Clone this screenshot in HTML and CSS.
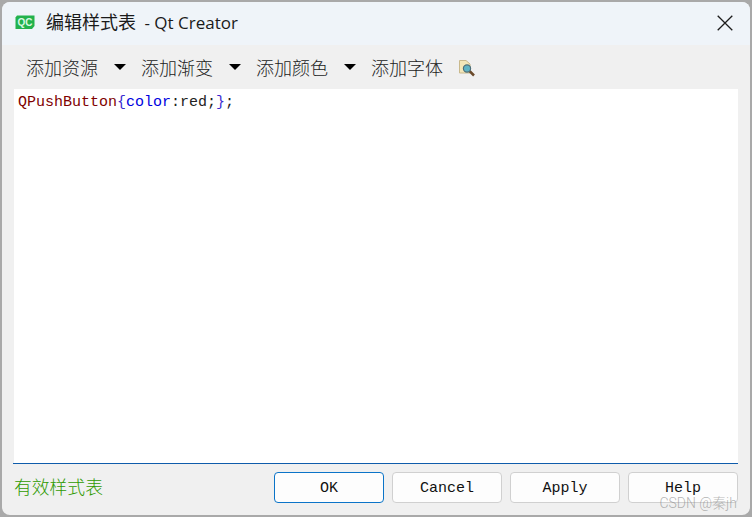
FILE: index.html
```html
<!DOCTYPE html>
<html lang="zh">
<head>
<meta charset="utf-8">
<title>编辑样式表 - Qt Creator</title>
<link rel="stylesheet" href="styles.css">
</head>
<body>
<div class="window">
  <header class="titlebar">
    <svg class="app-icon" width="20" height="15" viewBox="0 0 20 15"><path d="M2 .5H19.500V11L17 14H.5V2.500Z" fill="#22b24c"/><text x="10" y="11" class="app-icon-text" text-anchor="middle">QC</text></svg>
    <span class="title"><span class="title-cjk">编辑样式表</span> - Qt Creator</span>
    <svg class="close" width="16" height="16" viewBox="0 0 16 16"><path d="M.7.7 15.300 15.300M15.300.7.7 15.300" stroke="#1c1c1c" stroke-width="1.300" fill="none"/></svg>
  </header>
  <div class="toolbar">
    <span class="tool">添加资源</span><span class="arrow"></span>
    <span class="tool">添加渐变</span><span class="arrow"></span>
    <span class="tool">添加颜色</span><span class="arrow"></span>
    <span class="tool">添加字体</span>
    <svg class="find" width="18" height="18" viewBox="0 0 18 18">
      <path d="M1.500 1.500H8L12 5V14H1.500Z" fill="#f3e6b8" stroke="#c9b98c"/>
      <path d="M16 16.500 11.500 12" stroke="#6b4a2a" stroke-width="2.500"/>
      <circle cx="9" cy="9.500" r="3.600" fill="#5fb3c4" stroke="#4d6f7a" stroke-width="1.200"/>
    </svg>
  </div>
  <div class="editor-frame">
    <div class="editor"><span class="sel">QPushButton</span><span class="brace">{</span><span class="prop">color</span>:red;<span class="brace">}</span>;</div>
  </div>
  <footer class="footer">
    <span class="status">有效样式表</span>
    <div class="buttons">
      <button class="btn btn-default">OK</button>
      <button class="btn">Cancel</button>
      <button class="btn">Apply</button>
      <button class="btn">Help</button>
    </div>
  </footer>
  <span class="watermark">CSDN @秦jh</span>
</div>
</body>
</html>
```
FILE: styles.css
```css
* { box-sizing: border-box; }
html, body { margin: 0; height: 100%; }
body { background: #a9a9a9; overflow: hidden; padding: 2px; }
.window {
  position: relative;
  height: 513px;
  background: #f0f0f0;
  border-radius: 8px;
  overflow: hidden;
  display: flex;
  flex-direction: column;
  font-family: "Noto Sans CJK SC", sans-serif;
}
.titlebar {
  height: 43px;
  flex: none;
  background: #eff4f9;
  display: flex;
  align-items: center;
  padding: 0 17px 2px 13px;
}
.app-icon { flex: none; }
.app-icon-text { font: 700 10px "Liberation Sans", sans-serif; fill: #d8f8e2; }
.title {
  margin: 0 0 3px 11px;
  font: 17px "Open Sans", "Noto Sans CJK SC", sans-serif;
  color: #1a1a1a;
  flex: 1;
}
.title-cjk { font-size: 18px; margin-right: 4px; }
.close { flex: none; }
.toolbar {
  height: 44px;
  flex: none;
  display: flex;
  align-items: center;
  padding: 0 0 0 24px;
  color: #222;
  font-size: 18px;
}
.tool { width: 72px; line-height: 24px; font-weight: 300; }
.arrow {
  width: 0;
  height: 0;
  margin: 0 15px 0 16px;
  border: 6px solid transparent;
  border-top: 6px solid #000;
  border-bottom: 0;
}
.find { margin-left: 15px; margin-top: 1px; }
.editor-frame {
  height: 375px;
  flex: none;
  margin: 0 12px 0 11px;
  border-bottom: 1px solid #0f5cab;
}
.editor {
  height: 100%;
  margin-left: 1px;
  padding: 5px 0 0 4px;
  background: #fff;
  font: 15px/18px "Liberation Mono", monospace;
  color: #222;
}
.sel { color: #800000; }
.brace { color: #3a2ad0; }
.prop { color: #0000e0; }
.footer {
  flex: 1;
  display: flex;
  align-items: flex-start;
  justify-content: space-between;
  padding: 8px 12px 0 12px;
}
.status {
  color: #2f9a00;
  font-size: 17.800px;
  line-height: 28px;
  font-weight: 300;
}
.buttons { display: flex; gap: 8px; }
.btn {
  width: 110px;
  height: 31px;
  padding: 1px 0 0;
  background: #fdfdfd;
  border: 1px solid #d0d0d0;
  border-radius: 4px;
  font: 15px "Liberation Mono", monospace;
  color: #111;
}
.btn-default { border-color: #0b74c8; }
.watermark {
  position: absolute;
  right: 13px;
  bottom: 3px;
  font: 300 14px Roboto, "Noto Sans CJK SC", sans-serif;
  color: rgba(130, 130, 130, .6);
}
```
